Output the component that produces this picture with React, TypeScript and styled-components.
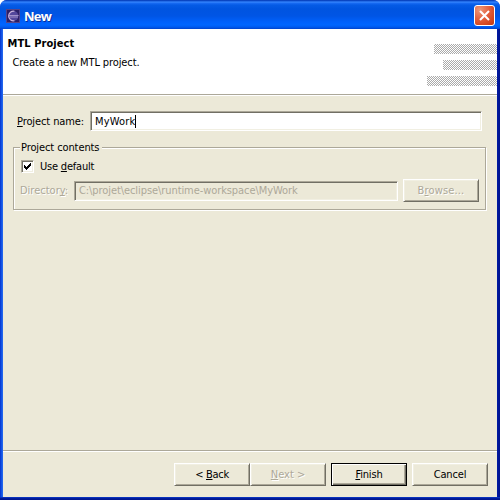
import React from "react";
import styled, { createGlobalStyle, css } from "styled-components";

const GlobalStyle = createGlobalStyle`
  html, body { margin: 0; padding: 0; background: #fff; overflow: hidden; }
  * { box-sizing: border-box; }
`;

const Dialog = styled.main`
  width: 500px;
  height: 500px;
  display: grid;
  grid-template-rows: 29px minmax(0, 1fr) 3px;
  border-radius: 7px 7px 0 0;
  overflow: hidden;
  background: #0831d9;
  font: 11px/14px "DejaVu Sans Condensed", "DejaVu Sans", sans-serif;
  font-stretch: condensed;
  color: #000;
`;

const TitleBar = styled.header`
  display: flex;
  align-items: center;
  padding: 2px 5px 0 6px;
  background: linear-gradient(
    #0a3fb4 0, #0a4cd0 1px, #3c8cff 2px, #1a6cf4 3px, #055be6 5px, #0054e0 9px,
    #0055e5 16px, #0061fc 22px, #0066ff 25px, #005bf0 27px, #0042cc 29px
  );
`;

const Title = styled.h1<{ $spacing: number }>`
  flex: 1;
  margin: 0 0 0 4px;
  font: bold 13px/18px "Open Sans", "Noto Sans", sans-serif;
  letter-spacing: ${(p) => p.$spacing}px;
  color: #fff;
  text-shadow: 1px 1px 0 #0a2f9c;
`;

const AppIcon = styled.svg`
  display: block;
  width: 14px;
  height: 14px;
`;

const CloseButton = styled.button`
  width: 21px;
  height: 21px;
  padding: 0;
  border: 1px solid #fff;
  border-radius: 3px;
  background: radial-gradient(circle at 25% 20%, #ee9878 0, #e3603e 45%, #d0431c 80%, #b83a18 100%);
  svg { display: block; }
`;

const Frame = styled.div`
  display: grid;
  grid-template-rows: 65px 2px minmax(0, 1fr) 2px 45px;
  margin: 0 3px;
  background: #ece9d8;
`;

const EdgeBottom = styled.div`
  background: linear-gradient(#1446d8 0, #001ea0 1px, #00138c 3px);
`;

const FrameSides = styled.div`
  display: grid;
  background: linear-gradient(90deg, #0a2ec8 0, #0a4be0 1px, #2a6cf0 3px, #0a2ec8 4px, #0018a4 497px, #00138c 500px);
`;

const Banner = styled.section`
  display: flex;
  justify-content: space-between;
  background: #fff;
`;

const BannerText = styled.div`
  padding: 8px 0 0 4.5px;
`;

const BannerHeading = styled.h2`
  margin: 0;
  font: inherit;
  font-weight: bold;
  letter-spacing: 0.08px;
`;

const BannerNote = styled.p`
  margin: 4px 0 0 5px;
`;

const Rule = styled.hr`
  width: 100%;
  height: 2px;
  margin: 0;
  border: 0;
  border-top: 1px solid #aca899;
  background: #fff;
`;

const HatchArt = styled.svg`
  display: block;
  width: 70px;
  height: 42px;
  margin-top: 15px;
`;

const Label = styled.span<{ $spacing?: number; $disabled?: boolean }>`
  display: inline-block;
  padding-top: 1px;
  white-space: pre;
  letter-spacing: ${(p) => p.$spacing ?? 0}px;
  ${(p) => p.$disabled && css`
    color: #aca899;
    text-shadow: 1px 1px 0 #fff;
  `}
`;

const Key = styled.span`
  text-decoration: underline;
  text-decoration-thickness: 1px;
  text-underline-offset: 1px;
  text-decoration-skip-ink: none;
`;

const Body = styled.section`
  padding: 15px 11px 0 10px;
`;

const NameRow = styled.div`
  display: grid;
  grid-template-columns: 73px 392px;
  align-items: center;
  padding-left: 4px;
  height: 20px;
`;

const Field = styled.div<{ $disabled?: boolean }>`
  display: flex;
  align-items: center;
  height: 20px;
  padding: 0 0 0 4px;
  border: 1px solid;
  border-color: #aca899 #fff #fff #aca899;
  box-shadow: inset 1px 1px 0 #716f64, inset -1px -1px 0 #f1efe2;
  background: ${(p) => (p.$disabled ? "#ece9d8" : "#fff")};
  color: ${(p) => (p.$disabled ? "#aca899" : "#000")};
`;

const Caret = styled.i`
  width: 1px;
  height: 13px;
  background: #000;
`;

const Group = styled.fieldset`
  margin: 9px 0 0;
  height: 70px;
  min-width: 0;
  width: 473px;
  padding: 0 6px;
  border: 1px solid #aca899;
  box-shadow: 1px 1px 0 #fff, inset 1px 1px 0 #fff;
`;

const Legend = styled.legend`
  height: 14px;
  padding: 0 3px 0 1px;
  background: #ece9d8;
`;

const CheckRow = styled.div`
  display: flex;
  align-items: center;
  gap: 6px;
  height: 14px;
  margin: 5px 0 0 1px;
`;

const CheckBox = styled.span`
  width: 13px;
  height: 13px;
  border: 1px solid;
  border-color: #aca899 #fff #fff #aca899;
  box-shadow: inset 1px 1px 0 #716f64, inset -1px -1px 0 #f1efe2;
  background: #fff;
  svg { display: block; }
`;

const DirectoryRow = styled.div`
  display: grid;
  grid-template-columns: 54px 324px 81px;
  align-items: center;
  margin-top: 6px;
  height: 23px;
  button { margin-left: 5px; }
`;

const Button = styled.button<{ $primary?: boolean }>`
  width: 76px;
  height: 23px;
  padding: 0;
  font: inherit;
  color: #000;
  background: #ece9d8;
  border: 1px solid;
  ${(p) => p.$primary
    ? css`
        border-color: #000;
        box-shadow: inset 1px 1px 0 #fff, inset -1px -1px 0 #716f64, inset -2px -2px 0 #aca899;
      `
    : css`
        border-color: #fff #716f64 #716f64 #fff;
        box-shadow: inset 1px 1px 0 #f1efe2, inset -1px -1px 0 #aca899;
      `}
`;

const Footer = styled.footer`
  display: flex;
  justify-content: flex-end;
  align-items: flex-start;
  gap: 5px;
  padding: 11px 9px 0 0;
`;

const ButtonPair = styled.div`
  display: flex;
`;

function EclipseIcon() {
  return (
    <AppIcon viewBox="0 0 14 14">
      <rect width="14" height="14" fill="#2c1f66" />
      <rect x="0.5" y="0.5" width="13" height="13" fill="none" stroke="#55458a" />
      <circle cx="7.4" cy="7" r="5" fill="#54479b" />
      <path d="M8.5 2.2A4.9 4.9 0 1 0 8.5 11.8" fill="none" stroke="#cbb3dc" strokeWidth="1.1" />
      <path d="M3 6.5H12.6M3.4 8H12" stroke="#b5a4d6" strokeWidth="0.8" />
    </AppIcon>
  );
}

function Hatching() {
  return (
    <HatchArt viewBox="0 0 70 42" shapeRendering="crispEdges">
      <defs>
        <pattern id="checker" width="2" height="2" patternUnits="userSpaceOnUse">
          <rect width="2" height="2" fill="#fff" />
          <rect width="1" height="1" fill="#aaa" />
          <rect x="1" y="1" width="1" height="1" fill="#aaa" />
        </pattern>
      </defs>
      <rect x="7" y="0" width="63" height="10" fill="url(#checker)" />
      <rect x="16" y="16" width="54" height="10" fill="url(#checker)" />
      <rect x="0" y="32" width="70" height="10" fill="url(#checker)" />
    </HatchArt>
  );
}

export default function App() {
  return (
    <>
      <GlobalStyle />
      <Dialog>
        <TitleBar>
          <EclipseIcon />
          <Title $spacing={-0.7}>New</Title>
          <CloseButton aria-label="Close">
            <svg width="19" height="19" viewBox="0 0 19 19">
              <path d="M5 5L14 14M14 5L5 14" stroke="#fff" strokeWidth="2.1" />
            </svg>
          </CloseButton>
        </TitleBar>
        <FrameSides>
          <Frame>
            <Banner>
              <BannerText>
                <BannerHeading>MTL Project</BannerHeading>
                <BannerNote>
                  <Label $spacing={-0.1}>Create a new MTL project.</Label>
                </BannerNote>
              </BannerText>
              <Hatching />
            </Banner>
            <Rule />
            <Body>
              <NameRow>
                <Label $spacing={-0.1}><Key>P</Key>roject name:</Label>
                <Field>
                  <Label $spacing={0.15}>MyWork</Label>
                  <Caret />
                </Field>
              </NameRow>
              <Group>
                <Legend><Label $spacing={-0.1}>Project contents</Label></Legend>
                <CheckRow>
                  <CheckBox>
                    <svg width="11" height="11" viewBox="0 0 11 11" shapeRendering="crispEdges">
                      <path d="M2 4h1v1h1v1h1v-1h1v-1h1v-1h1v-1h1v3h-1v1h-1v1h-1v1h-1v1h-1v-1h-1v-1h-1z" />
                    </svg>
                  </CheckBox>
                  <Label $spacing={-0.2}>Use <Key>d</Key>efault</Label>
                </CheckRow>
                <DirectoryRow>
                  <Label $disabled>Director<Key>y</Key>:</Label>
                  <Field $disabled>
                    <Label $spacing={-0.08}>C:\projet\eclipse\runtime-workspace\MyWork</Label>
                  </Field>
                  <Button disabled>
                    <Label $disabled $spacing={0.15}>B<Key>r</Key>owse...</Label>
                  </Button>
                </DirectoryRow>
              </Group>
            </Body>
            <Rule />
            <Footer>
              <ButtonPair>
                <Button><Label $spacing={-0.3}>&lt; <Key>B</Key>ack</Label></Button>
                <Button disabled><Label $disabled><Key>N</Key>ext &gt;</Label></Button>
              </ButtonPair>
              <Button $primary><Label $spacing={-0.15}><Key>F</Key>inish</Label></Button>
              <Button><Label $spacing={-0.15}>Cancel</Label></Button>
            </Footer>
          </Frame>
        </FrameSides>
        <EdgeBottom />
      </Dialog>
    </>
  );
}
